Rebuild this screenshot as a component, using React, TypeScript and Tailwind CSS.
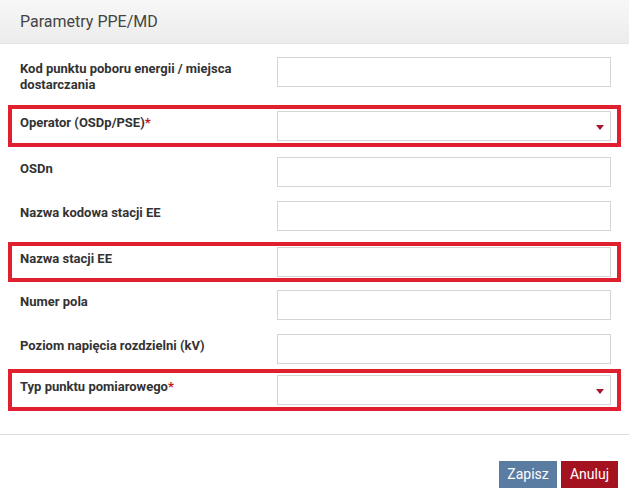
import React from "react";

type Field = {
  label: string;
  required?: boolean;
  select?: boolean;
  boxed?: boolean;
  mt: string;
  py?: string;
};

const fields: Field[] = [
  { label: "Kod punktu poboru energii / miejsca dostarczania", mt: "mt-0" },
  { label: "Operator (OSDp/PSE)", required: true, select: true, boxed: true, mt: "mt-[12px]", py: "pt-[2px] pb-[2px]" },
  { label: "OSDn", mt: "mt-[10px]" },
  { label: "Nazwa kodowa stacji EE", mt: "mt-[14px]" },
  { label: "Nazwa stacji EE", boxed: true, mt: "mt-[11px]", py: "py-[1px]" },
  { label: "Numer pola", mt: "mt-[8px]" },
  { label: "Poziom napięcia rozdzielni (kV)", mt: "mt-[14px]" },
  { label: "Typ punktu pomiarowego", required: true, select: true, boxed: true, mt: "mt-[5px]", py: "py-[2px]" },
];

function Caret() {
  return (
    <svg width="8" height="5" viewBox="0 0 8 5" className="absolute right-[6px] top-[13px]">
      <path d="M0 0 L8 0 L4 5 Z" fill="#a3162b" />
    </svg>
  );
}

function Row({ f }: { f: Field }) {
  const inner = (
    <div className="flex items-start">
      <label className="w-[257px] shrink-0 pr-[22px] pt-[4px] text-[13px] font-bold leading-[16px] text-[#333]">
        {f.label}
        {f.required && <span className="text-[#c4161c]">*</span>}
      </label>
      <div className="relative h-[30px] flex-1 border border-[#d4d4d4] bg-white">
        {f.select && <Caret />}
      </div>
    </div>
  );

  if (f.boxed) {
    return (
      <div className={`${f.mt} -ml-[12px] -mr-[10px] border-4 border-[#e0202e] pl-[8px] pr-[6px] ${f.py}`}>
        {inner}
      </div>
    );
  }
  return <div className={f.mt}>{inner}</div>;
}

export default function App() {
  return (
    <div className="h-[502px] w-[629px] overflow-hidden bg-white font-['Roboto','Liberation_Sans',sans-serif]">
      <div className="flex h-[44px] items-center border-b border-[#e6e6e6] bg-gradient-to-b from-[#f7f7f7] to-[#ececec] px-[20px]">
        <h1 className="text-[16px] text-[#444]">Parametry PPE/MD</h1>
      </div>

      <form className="pl-[20px] pr-[18px] pt-[13px]">
        {fields.map((f) => (
          <Row key={f.label} f={f} />
        ))}
      </form>

      <div className="mt-[23px] border-t border-[#dcdcdc]" />

      <div className="flex justify-end gap-[4px] pr-[11px] pt-[26px]">
        <button className="h-[27px] w-[58px] bg-[#5b7ca2] text-[14px] text-white">Zapisz</button>
        <button className="h-[27px] w-[57px] bg-[#a5121f] text-[14px] text-white">Anuluj</button>
      </div>
    </div>
  );
}
